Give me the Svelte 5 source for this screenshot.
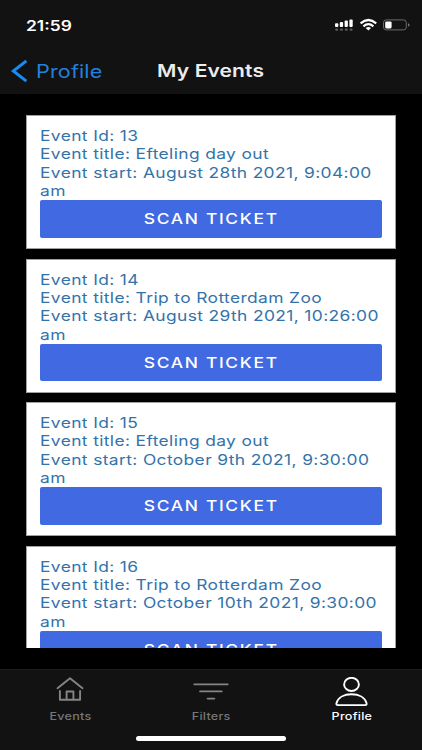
<script>
  const events = [
    { id: 13, title: 'Efteling day out', start: 'August 28th 2021, 9:04:00 am' },
    { id: 14, title: 'Trip to Rotterdam Zoo', start: 'August 29th 2021, 10:26:00 am' },
    { id: 15, title: 'Efteling day out', start: 'October 9th 2021, 9:30:00 am' },
    { id: 16, title: 'Trip to Rotterdam Zoo', start: 'October 10th 2021, 9:30:00 am' }
  ];
</script>

<div class="screen">
  <header>
    <div class="status">
      <span class="time wide">21:59</span>
      <svg class="indicators" width="78" height="16" viewBox="0 0 78 16">
        <g fill="#fff">
          <rect x="1" y="6.2" width="3.3" height="3.8" rx="1" />
          <rect x="5.8" y="5" width="3.3" height="5" rx="1" />
          <rect x="10.6" y="3.6" width="3.3" height="6.4" rx="1" />
          <rect x="15.4" y="2.4" width="3.3" height="7.6" rx="1" />
        </g>
        <g fill="#5c5c5c">
          <rect x="1.2" y="11.5" width="3" height="2.2" rx="1" />
          <rect x="6" y="11.5" width="3" height="2.2" rx="1" />
          <rect x="10.8" y="11.5" width="3" height="2.2" rx="1" />
          <rect x="15.6" y="11.5" width="3" height="2.2" rx="1" />
        </g>
        <g fill="none" stroke="#fff" stroke-width="2.2">
          <path d="M26.6 6.3Q34.4 -0.3 42.2 6.3" />
          <path d="M29.4 9.3Q34.4 5 39.4 9.3" />
        </g>
        <path d="M31.7 11Q34.4 8.8 37.1 11L34.4 13.4Z" fill="#fff" />
        <rect x="49.5" y="2.9" width="22.8" height="10" rx="2.8" fill="none" stroke="#6b6b6b" />
        <rect x="51.2" y="4.4" width="6.4" height="7" rx="1.3" fill="#fff" />
        <path d="M74 6.2Q75.6 6.8 75.6 7.9T74 9.6Z" fill="#777" />
      </svg>
    </div>
    <nav class="titlebar">
      <a class="back" href="#profile">
        <svg width="17" height="24" viewBox="0 0 17 24"><path d="M16.3 1.9L3.3 12L16.3 22.1" fill="none" stroke="#168cf5" stroke-width="2.9" /></svg>
        <span class="wide">Profile</span>
      </a>
      <h1><span class="wide">My Events</span></h1>
    </nav>
  </header>

  <main>
    {#each events as event (event.id)}
      <article>
        <div class="details">
          <div>Event Id: {event.id}</div>
          <div>Event title: {event.title}</div>
          <div>Event start: {event.start}</div>
        </div>
        <button><span class="wide">SCAN TICKET</span></button>
      </article>
    {/each}
  </main>

  <footer>
    <div class="tabs">
      <a href="#events">
        <svg width="36" height="32" viewBox="0 0 36 32" fill="none" stroke="#858585" stroke-width="1.9" stroke-linejoin="round" stroke-linecap="round">
          <path d="M5.5 11.2L18 1.3L30.5 11.2M7.9 14V22.8H28.1V14M14.6 22.5V14.5H21.4V22.5" />
        </svg>
        <span class="wide">Events</span>
      </a>
      <a href="#filters">
        <svg width="36" height="32" viewBox="0 0 36 32" fill="none" stroke="#858585" stroke-width="1.7" stroke-linecap="round">
          <path d="M1.2 7.3H34.8M7 14.4H28.8M14.6 21.6H21.4" />
        </svg>
        <span class="wide">Filters</span>
      </a>
      <a class="active" href="#profile">
        <svg width="36" height="32" viewBox="0 0 36 32" fill="none" stroke="#fff" stroke-width="1.9">
          <ellipse cx="17.5" cy="7.4" rx="7.4" ry="6.6" />
          <path d="M3.8 28.1Q2.2 28.1 2.4 26.4C3.9 20.1 10.5 17.3 17.5 17.3S31.1 20.1 32.6 26.4Q32.8 28.1 31.2 28.1Z" />
        </svg>
        <span class="wide">Profile</span>
      </a>
    </div>
    <div class="home"></div>
  </footer>
</div>

<style>
  :global(body) { margin: 0; background: #000; }
  .screen {
    width: 422px;
    height: 750px;
    display: flex;
    flex-direction: column;
    overflow: hidden;
    background: #000;
    font-family: Inter, "Liberation Sans", sans-serif;
  }
  a { color: inherit; text-decoration: none; }
  .wide { display: inline-block; transform: scaleX(1.2); white-space: nowrap; }
  header { height: 94px; flex: none; background: #121212; }
  .status { height: 48px; box-sizing: border-box; padding: 17px 10px 0 26px; display: flex; justify-content: space-between; }
  .time { color: #fff; font-size: 14.5px; line-height: 17px; font-weight: 600; transform-origin: left; }
  .titlebar { height: 46px; display: grid; grid-template-columns: 1fr auto 1fr; align-items: center; }
  .back { display: flex; align-items: center; gap: 9px; padding-left: 10px; color: #2280df; font-size: 18px; letter-spacing: 0.1px; }
  .back .wide { transform-origin: left; }
  h1 { margin: 0; color: #ececec; font-size: 17.5px; line-height: 22px; font-weight: 600; letter-spacing: 0.1px; }
  main {
    height: 533px;
    flex: none;
    margin: 21px 26px 0;
    overflow: hidden;
    display: flex;
    flex-direction: column;
    gap: 9.5px;
  }
  article { height: 134px; flex: none; box-sizing: border-box; padding: 11px 13px 0; border: 1px solid #a0a0a0; background: #fff; }
  .details {
    width: 285px;
    transform: scaleX(1.2);
    transform-origin: left;
    color: #3373a9;
    font-size: 14.5px;
    line-height: 18.35px;
    letter-spacing: 0.31px;
  }
  button {
    display: flex;
    align-items: center;
    justify-content: center;
    width: 100%;
    height: 37.6px;
    padding: 0 0 1px;
    border: 0;
    border-radius: 2px;
    background: #4169e1;
    color: #fff;
    font: 500 14.5px Inter, sans-serif;
    letter-spacing: 1.4px;
  }
  footer { margin-top: auto; height: 81px; box-sizing: border-box; border-top: 1px solid #1d1d1d; background: #121212; }
  .tabs { height: 66px; display: flex; }
  .tabs a { flex: 1; display: flex; flex-direction: column; align-items: center; padding-top: 7px; color: #777; font-size: 10.5px; line-height: 15px; font-weight: 500; letter-spacing: 0.2px; }
  .tabs .active { color: #fff; }
  .home { width: 150px; height: 5px; margin: 0 auto; border-radius: 3px; background: #fff; }
</style>
